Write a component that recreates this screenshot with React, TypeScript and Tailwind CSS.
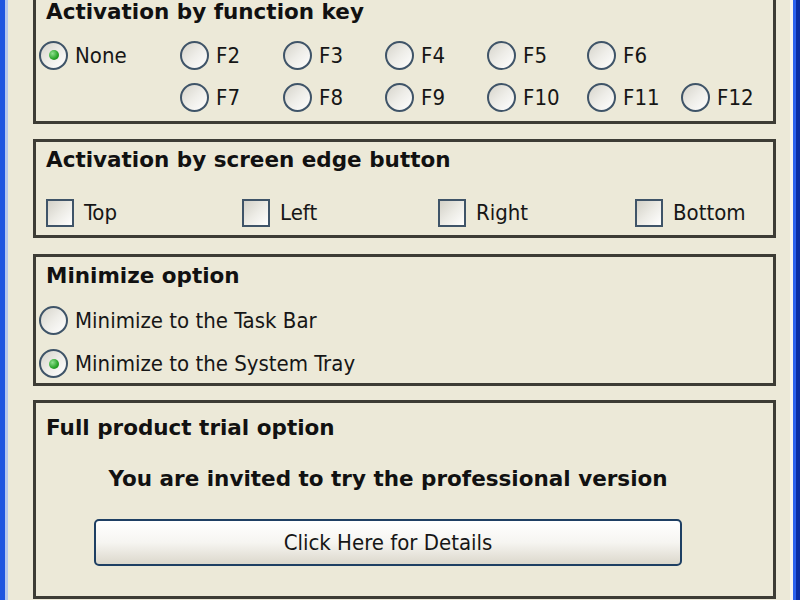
import type { ReactNode } from "react";

const body = "font-['DejaVu_Sans_Condensed','Liberation_Sans',sans-serif] text-[22px] text-[#161616]";
const heading = "font-['DejaVu_Sans',sans-serif] text-[21.5px] font-bold text-[#111]";

const row1 = ["F2", "F3", "F4", "F5", "F6"];
const row2 = ["F7", "F8", "F9", "F10", "F11", "F12"];
const edges = ["Top", "Left", "Right", "Bottom"];

function Radio({ label, checked = false }: { label: string; checked?: boolean }) {
  return (
    <label className="flex items-center gap-[7px]">
      <span className="flex h-[29px] w-[29px] shrink-0 items-center justify-center rounded-full border-2 border-[#3f5468] bg-linear-to-br from-[#d6d4cb] via-[#eeede8] to-white">
        {checked && (
          <span className="h-[10px] w-[10px] rounded-full bg-[radial-gradient(circle_at_35%_35%,#8fe08f,#27a327_60%,#1a7d1a)]" />
        )}
      </span>
      <span className={body}>{label}</span>
    </label>
  );
}

function Checkbox({ label }: { label: string }) {
  return (
    <label className="flex items-center gap-[10px]">
      <span className="h-[28px] w-[28px] shrink-0 border-2 border-[#3f5468] bg-linear-to-br from-[#d3d1c8] via-[#ecebe5] to-white" />
      <span className={body}>{label}</span>
    </label>
  );
}

function GroupBox({
  title,
  className,
  children,
}: {
  title: string;
  className: string;
  children: ReactNode;
}) {
  return (
    <fieldset className={`w-[743px] shrink-0 border-[3px] border-[#3d3c35] ${className}`}>
      <div className={`pl-[10px] leading-[26px] ${heading}`}>{title}</div>
      {children}
    </fieldset>
  );
}

export default function App() {
  return (
    <div className="flex h-[600px] w-[800px] overflow-hidden bg-[#ece9d8]">
      {/* window frame, left side */}
      <div className="w-[5px] shrink-0 bg-[#1f55e0]" />
      <div className="w-[3px] shrink-0 bg-[#b4c6ee]" />

      <div className="flex flex-1 flex-col pl-[25px]">
        <GroupBox title="Activation by function key" className="-mt-[10px] h-[134px] pt-[6px]">
          <div className="mt-[9px] grid grid-cols-[141px_103px_102px_102px_100px_94px_1fr] pl-[3px]">
            <div className="flex h-[42px] items-center">
              <Radio label="None" checked />
            </div>
            {row1.map((k) => (
              <div key={k} className="flex h-[42px] items-center">
                <Radio label={k} />
              </div>
            ))}
            <div />
            <div />
            {row2.map((k) => (
              <div key={k} className="flex h-[42px] items-center">
                <Radio label={k} />
              </div>
            ))}
          </div>
        </GroupBox>

        <GroupBox title="Activation by screen edge button" className="mt-[15px] h-[99px] pt-[5px]">
          <div className="mt-[23px] grid h-[30px] grid-cols-[196px_196px_197px_1fr] items-center pl-[10px]">
            {edges.map((e) => (
              <Checkbox key={e} label={e} />
            ))}
          </div>
        </GroupBox>

        <GroupBox title="Minimize option" className="mt-[16px] h-[132px] pt-[6px]">
          <div className="mt-[10px] flex flex-col pl-[3px]">
            <div className="flex h-[43px] items-center">
              <Radio label="Minimize to the Task Bar" />
            </div>
            <div className="flex h-[43px] items-center">
              <Radio label="Minimize to the System Tray" checked />
            </div>
          </div>
        </GroupBox>

        <GroupBox title="Full product trial option" className="mt-[14px] h-[199px] pt-[12px]">
          <div className="flex w-[704px] flex-col items-center">
            <div className={`mt-[25px] leading-[26px] ${heading}`}>
              You are invited to try the professional version
            </div>
            <button
              type="button"
              className={`mt-[27px] h-[47px] w-[588px] rounded-[5px] border-2 border-[#1e3f63] bg-linear-to-b from-white via-[#f6f5f1] to-[#dcd8cc] ${body}`}
            >
              Click Here for Details
            </button>
          </div>
        </GroupBox>
      </div>

      {/* window frame, right side */}
      <div className="w-[3px] shrink-0 bg-[#f6f5f0]" />
      <div className="w-[3px] shrink-0 bg-[#2c62ee]" />
      <div className="w-[4px] shrink-0 bg-[#0b2ea4]" />
    </div>
  );
}
